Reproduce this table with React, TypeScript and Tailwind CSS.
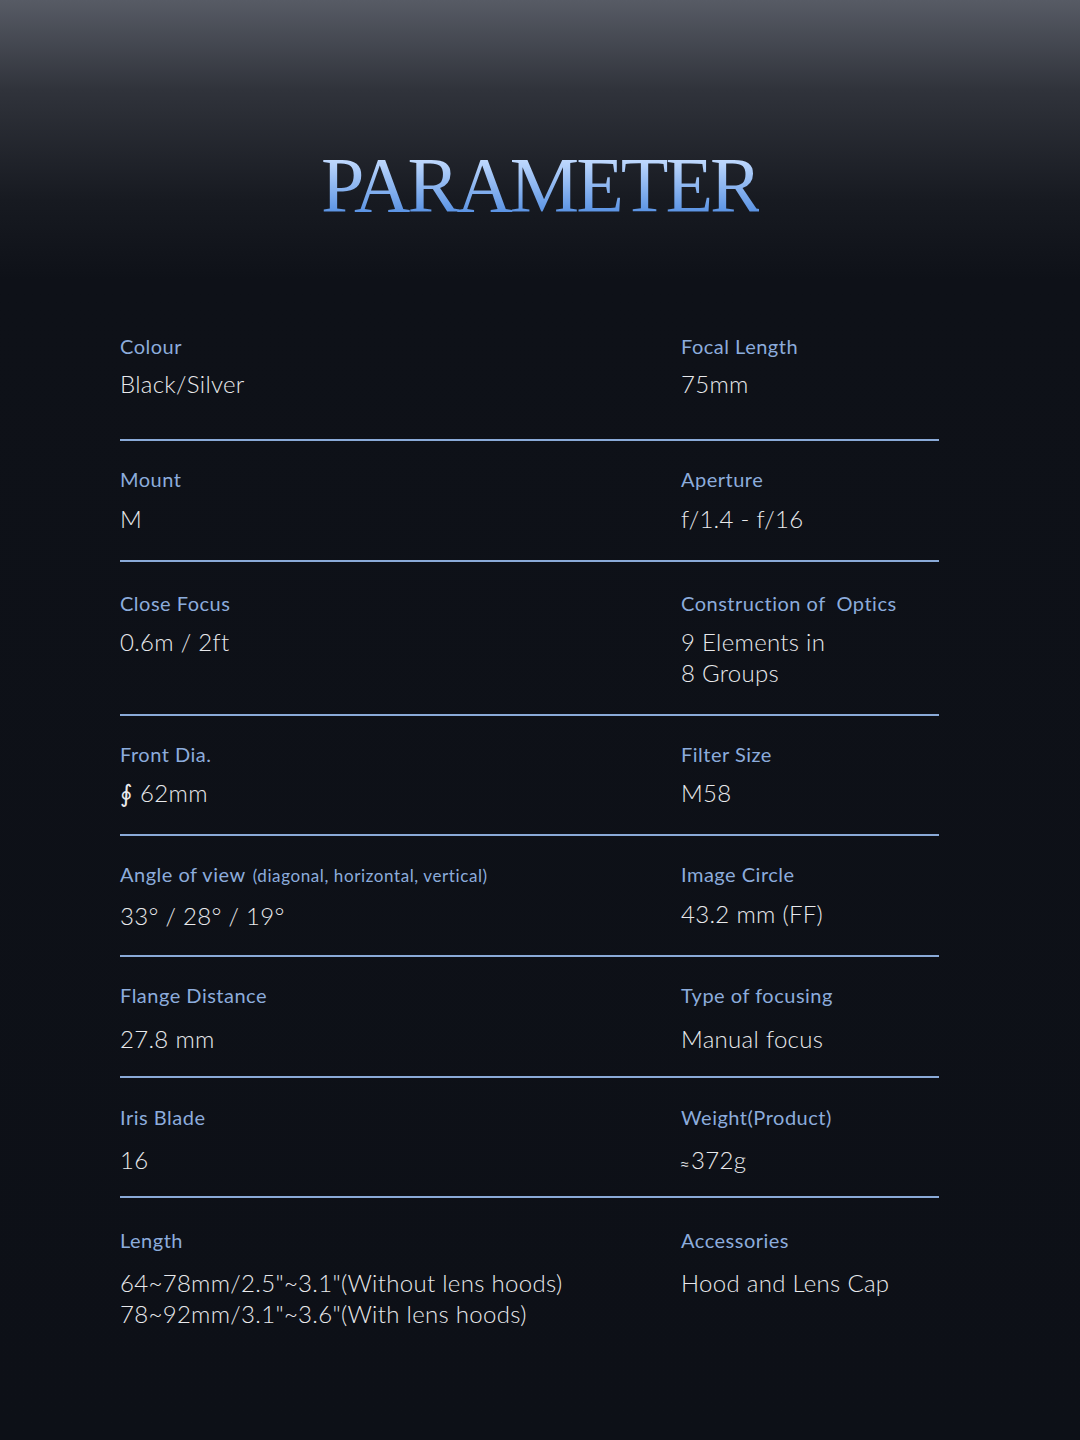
const rows = [
  {
    h: "h-[133px]",
    pt: "pt-[24px]",
    gap: "mt-[8px]",
    left: { label: "Colour", value: ["Black/Silver"] },
    right: { label: "Focal Length", value: ["75mm"] },
  },
  {
    h: "h-[121px]",
    pt: "pt-[24px]",
    gap: "mt-[10px]",
    left: { label: "Mount", value: ["M"] },
    right: { label: "Aperture", value: ["f/1.4 - f/16"] },
  },
  {
    h: "h-[154px]",
    pt: "pt-[27px]",
    gap: "mt-[9px]",
    left: { label: "Close Focus", value: ["0.6m / 2ft"] },
    right: { label: "Construction of  Optics", value: ["9 Elements in", "8 Groups"] },
  },
  {
    h: "h-[120px]",
    pt: "pt-[24px]",
    gap: "mt-[9px]",
    left: { label: "Front Dia.", value: ["∮ 62mm"] },
    right: { label: "Filter Size", value: ["M58"] },
  },
  {
    h: "h-[121px]",
    pt: "pt-[24px]",
    gap: "mt-[10px]",
    left: { label: "Angle of view", extra: "(diagonal, horizontal, vertical)", value: ["33° / 28° / 19°"] },
    right: { label: "Image Circle", value: ["43.2 mm (FF)"] },
  },
  {
    h: "h-[121px]",
    pt: "pt-[24px]",
    gap: "mt-[14px]",
    left: { label: "Flange Distance", value: ["27.8 mm"] },
    right: { label: "Type of focusing", value: ["Manual focus"] },
  },
  {
    h: "h-[120px]",
    pt: "pt-[25px]",
    gap: "mt-[13px]",
    left: { label: "Iris Blade", value: ["16"] },
    right: { label: "Weight(Product)", value: ["≈372g"] },
  },
  {
    h: "h-[160px]",
    pt: "pt-[28px]",
    gap: "mt-[13px]",
    left: { label: "Length", value: ['64~78mm/2.5"~3.1"(Without lens hoods)', '78~92mm/3.1"~3.6"(With lens hoods)'] },
    right: { label: "Accessories", value: ["Hood and Lens Cap"] },
  },
];

type Cell = { label: string; extra?: string; value: string[] };

function Spec({ cell, gap }: { cell: Cell; gap: string }) {
  return (
    <div>
      <div className="text-[20px] leading-[28px] text-[#8cacdc] tracking-[0.5px] whitespace-pre">
        {cell.label}
        {cell.extra && <span className="text-[17px] ml-[7px] tracking-[0.6px]">{cell.extra}</span>}
      </div>
      <div className={`${gap} text-[24px] leading-[31px] font-light text-[#e8e9ec] tracking-[0.3px]`}>
        {cell.value.map((v) =>
          v.startsWith("≈") ? (
            <div key={v}>
              <span className="text-[14px] mr-[2px]" style={{ fontFamily: "'DejaVu Sans', sans-serif" }}>
                ≈
              </span>
              {v.slice(1)}
            </div>
          ) : (
            <div key={v}>{v}</div>
          )
        )}
      </div>
    </div>
  );
}

export default function App() {
  return (
    <div
      className="w-[1080px] h-[1440px] bg-[#0d1017] bg-[linear-gradient(180deg,#575b65_0%,#30333b_90px,#171a21_200px,#0e1118_280px,#0d1017_100%)]"
      style={{ fontFamily: "Lato, 'Noto Sans', sans-serif" }}
    >
      <div className="flex justify-center pt-[146px]">
        <h1
          className="text-[78px] leading-[78px] tracking-[-3px] bg-[linear-gradient(180deg,#c4dcff_15%,#5a93e4_85%)] bg-clip-text text-transparent"
          style={{ fontFamily: "'Liberation Serif', serif" }}
        >
          PARAMETER
        </h1>
      </div>

      <div className="mx-[120px] w-[819px] mt-[84px]">
        {rows.map((r, i) => (
          <div
            key={i}
            className={`grid grid-cols-[561px_1fr] ${r.pt} ${r.h} ${i < rows.length - 1 ? "border-b-2 border-[#8aaad8]" : ""}`}
          >
            <Spec cell={r.left} gap={r.gap} />
            <Spec cell={r.right} gap={r.gap} />
          </div>
        ))}
      </div>
    </div>
  );
}
